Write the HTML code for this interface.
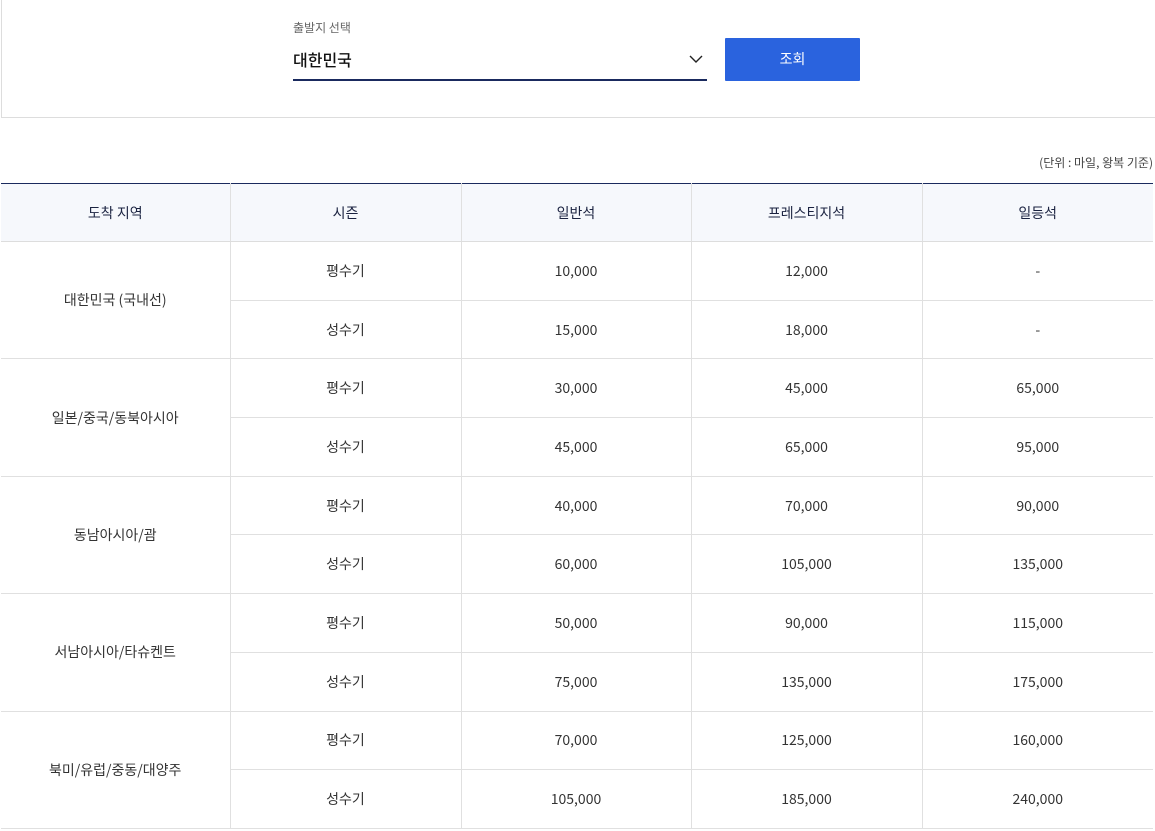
<!DOCTYPE html>
<html><head><meta charset="utf-8"><style>
body{margin:0;background:#fff;font-family:"Noto Sans CJK KR",sans-serif;color:#333;width:1155px;height:831px;overflow:hidden;position:relative}
.box{position:absolute;left:1px;top:-2px;width:1160px;height:120px;border:1px solid #ddd;box-sizing:border-box}
.lbl{position:absolute;left:293px;top:19px;font-size:12px;color:#666;line-height:18px}
.sel{position:absolute;left:293px;top:46px;width:414px;height:33px;border-bottom:2px solid #1a2a5e;font-size:16px;color:#111;line-height:26px;font-weight:500}
.sel svg{position:absolute;right:4px;top:8px}
.btn{position:absolute;left:725px;top:38px;width:135px;height:43px;background:#2a63de;color:#fff;font-size:14px;text-align:center;line-height:43px;border-radius:1px}
.unit{position:absolute;right:2px;top:154px;font-size:12px;color:#444;line-height:18px}
table{position:absolute;left:1px;top:183px;width:1152px;border-collapse:collapse;border-top:1px solid #1a2a5e;font-size:14px;table-layout:fixed}
th,td{padding:0;line-height:20px}
th{background:#f6f8fc;height:57px;font-weight:normal;color:#1a2240;border-right:1px solid #e0e0e0;border-bottom:1px solid #ddd}
td{height:57.7px;text-align:center;border-right:1px solid #e0e0e0;border-bottom:1px solid #e0e0e0;color:#333}
th:last-child,td:last-child{border-right:none}
</style></head><body>
<div class="box"></div>
<div class="lbl">출발지 선택</div>
<div class="sel">대한민국<svg width="14" height="10" viewBox="0 0 14 10"><path d="M1 2l6 6 6-6" fill="none" stroke="#222" stroke-width="1.4"/></svg></div>
<div class="btn">조회</div>
<div class="unit">(단위 : 마일, 왕복 기준)</div>
<table>
<colgroup><col style="width:229px"><col style="width:231px"><col style="width:230px"><col style="width:231px"><col></colgroup>
<tr><th>도착 지역</th><th>시즌</th><th>일반석</th><th>프레스티지석</th><th>일등석</th></tr>
<tr><td rowspan="2">대한민국 (국내선)</td><td>평수기</td><td>10,000</td><td>12,000</td><td>-</td></tr>
<tr><td>성수기</td><td>15,000</td><td>18,000</td><td>-</td></tr>
<tr><td rowspan="2">일본/중국/동북아시아</td><td>평수기</td><td>30,000</td><td>45,000</td><td>65,000</td></tr>
<tr><td>성수기</td><td>45,000</td><td>65,000</td><td>95,000</td></tr>
<tr><td rowspan="2">동남아시아/괌</td><td>평수기</td><td>40,000</td><td>70,000</td><td>90,000</td></tr>
<tr><td>성수기</td><td>60,000</td><td>105,000</td><td>135,000</td></tr>
<tr><td rowspan="2">서남아시아/타슈켄트</td><td>평수기</td><td>50,000</td><td>90,000</td><td>115,000</td></tr>
<tr><td>성수기</td><td>75,000</td><td>135,000</td><td>175,000</td></tr>
<tr><td rowspan="2">북미/유럽/중동/대양주</td><td>평수기</td><td>70,000</td><td>125,000</td><td>160,000</td></tr>
<tr><td>성수기</td><td>105,000</td><td>185,000</td><td>240,000</td></tr>
</table>
</body></html>
